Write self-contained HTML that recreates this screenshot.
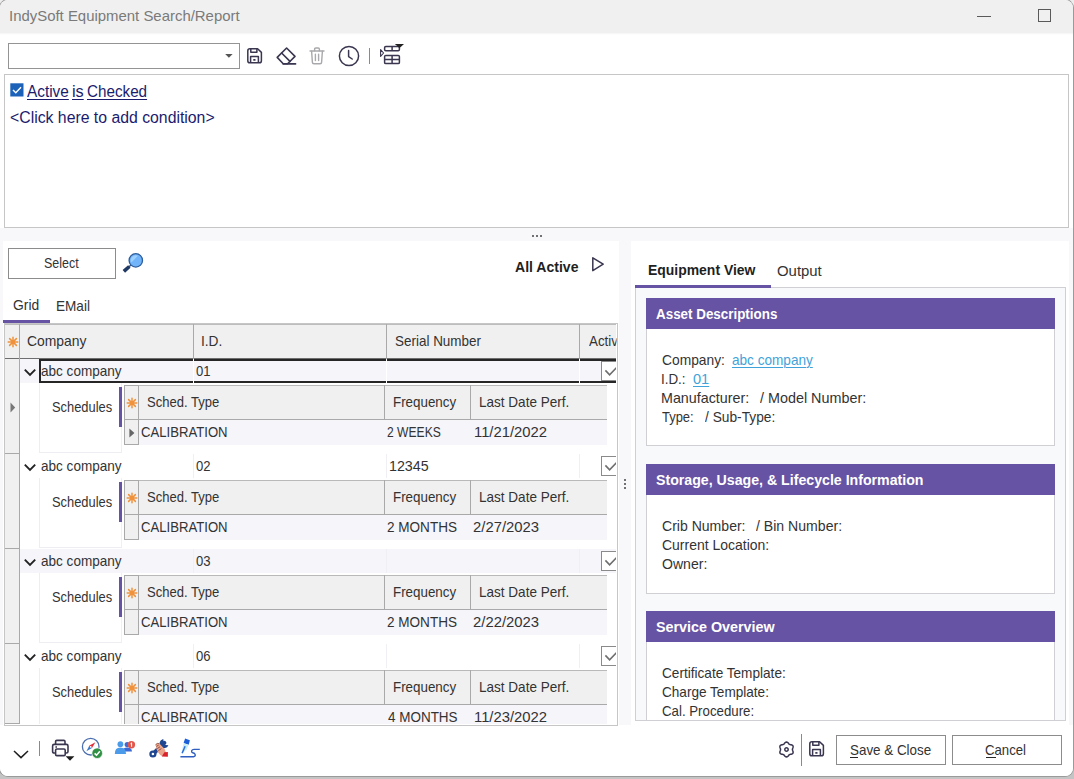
<!DOCTYPE html>
<html><head><meta charset="utf-8"><title>IndySoft Equipment Search/Report</title>
<style>
html,body{margin:0;padding:0}
body{width:1074px;height:779px;overflow:hidden;background:linear-gradient(#ededed 0px,#ededed 120px,#c4c4c4 600px,#c4c4c4 779px);font-family:"Liberation Sans", sans-serif;}
#win{position:absolute;left:0;top:0;width:1073px;height:776px;background:#fff;border-radius:8px;overflow:hidden;box-shadow:0 0 0 1px #9a9a9a;}
#win div,#win svg,#win span{position:absolute;box-sizing:border-box;}
#win span{white-space:pre;transform-origin:0 0;}
</style></head>
<body>
<div id="win">
<div style="left:0px;top:0px;width:1073px;height:33px;background:#f0f0f0;"></div>
<div style="left:0px;top:33px;width:1073px;height:2px;background:linear-gradient(#f4f4f4,#fff);"></div>
<div style="left:977px;top:15.5px;width:13.5px;height:1.2px;background:#5a5a5a;"></div>
<div style="left:1038px;top:9px;width:12px;height:12px;border:1px solid #5a5a5a;box-sizing:content-box;width:11px;height:11px;"></div>
<div style="left:8px;top:43px;width:232px;height:26px;border:1px solid #949494;background:#fff;"></div>
<svg style="left:224px;top:53px" width="10" height="6" viewBox="0 0 10 6"><path d="M1.2 1 L8.6 1 L4.9 4.8Z" fill="#555"/></svg>
<svg style="left:247.4px;top:48px" width="16" height="16" viewBox="0 0 16 16" fill="none" stroke="#3b3650" stroke-width="1.5" stroke-linejoin="round"><path d="M0.8 2.9 Q0.8 0.8 2.9 0.8 H10.6 L14.4 4.4 V12.7 Q14.4 14.8 12.3 14.8 H2.9 Q0.8 14.8 0.8 12.7Z"/><path d="M3.8 1 V4.2 H9.9 V1"/><path d="M3.6 14.8 V8.6 H11.4 V14.8"/><path d="M6.3 11.9 H8.5" stroke-width="1.7"/></svg>
<svg style="left:275px;top:46px" width="23" height="20" viewBox="0 0 23 20" fill="none" stroke="#3b3650" stroke-width="1.6" stroke-linejoin="round" stroke-linecap="round"><path d="M2.2 11.4 L11.6 2 L20 10.4 L12.6 17.8 H8.2Z"/><path d="M6.6 7 L15 15.4"/><path d="M8.2 17.9 H20.6"/></svg>
<svg style="left:309px;top:47px" width="16" height="18" viewBox="0 0 16 18" fill="none" stroke="#a9a9ad" stroke-width="1.4" stroke-linejoin="round" stroke-linecap="round"><path d="M1 4 H15"/><path d="M5.6 3.8 V2.2 Q5.6 1 6.8 1 H9.2 Q10.4 1 10.4 2.2 V3.8"/><path d="M2.6 4.2 L3.4 15.4 Q3.5 16.8 4.9 16.8 H11.1 Q12.5 16.8 12.6 15.4 L13.4 4.2"/><path d="M6.4 7.2 V13.6 M9.6 7.2 V13.6"/></svg>
<svg style="left:338px;top:45px" width="22" height="22" viewBox="0 0 22 22" fill="none" stroke="#3b3650" stroke-width="1.5" stroke-linecap="round" stroke-linejoin="round"><circle cx="11" cy="11" r="9.6"/><path d="M10.6 5.6 V11.6 L14.2 14"/></svg>
<div style="left:369px;top:48px;width:1px;height:15.5px;background:#8a8a8a;"></div>
<svg style="left:379px;top:43px" width="26" height="22" viewBox="0 0 26 22" fill="none" stroke="#3b3650" stroke-width="1.5" stroke-linejoin="round"><path d="M1.6 6.6 L4.6 10 L1.6 13.4Z" stroke-width="1.1" /><rect x="5.6" y="3.6" width="14.8" height="4.2" rx="1.2"/><path d="M13.1 3.6 V7.8"/><rect x="5.6" y="12.4" width="14.8" height="8.2" rx="1.2"/><path d="M5.6 16.5 H20.4 M13.1 12.4 V20.6"/><path d="M15.8 0.9 H25 L20.6 4.9Z" fill="#222" stroke="none"/></svg>
<div style="left:4px;top:74px;width:1065px;height:154px;border:1px solid #c6c6c6;background:#fff;"></div>
<svg style="left:10px;top:83px" width="14" height="14" viewBox="0 0 14 14"><rect x="0.3" y="0.3" width="13.2" height="13.2" fill="#1c62b9"/><path d="M3 7 L5.8 9.8 L11 4.2" fill="none" stroke="#fff" stroke-width="1.4"/></svg>
<div style="left:0px;top:228px;width:1073px;height:498px;background:#f8f8fb;"></div>
<div style="left:531.5px;top:234.6px;width:2px;height:2px;background:#444;border-radius:1px;"></div>
<div style="left:535.6px;top:234.6px;width:2px;height:2px;background:#444;border-radius:1px;"></div>
<div style="left:539.7px;top:234.6px;width:2px;height:2px;background:#444;border-radius:1px;"></div>
<div style="left:3px;top:241px;width:615.5px;height:485px;background:#fff;"></div>
<div style="left:8px;top:248px;width:108px;height:31px;border:1px solid #8c8c8c;background:#fff;"></div>
<svg style="left:121px;top:250px" width="26" height="26" viewBox="0 0 26 26"><path d="M7 17.6 L10.6 14.5" stroke="#3a5a8a" stroke-width="1.4"/><path d="M4.2 20.2 L7 17.7" stroke="#1f3864" stroke-width="3.6" stroke-linecap="square"/><circle cx="14.8" cy="10.4" r="6.7" fill="#72b4fa" stroke="#2c5d9c" stroke-width="1.3"/><path d="M10.4 12.6 A5 5 0 0 1 17 5.8 Z" fill="#a5d3ff" opacity="0.85"/></svg>
<svg style="left:590px;top:255px" width="16" height="18" viewBox="0 0 16 18"><path d="M2.8 2.8 L13.2 9.2 L2.8 15.6Z" fill="none" stroke="#3b3650" stroke-width="1.5" stroke-linejoin="round"/></svg>
<div style="left:3px;top:320px;width:47px;height:3px;background:#6753a4;"></div>
<div style="left:4px;top:323px;width:614px;height:403px;border:1px solid #c6c6c6;background:#fff;"></div>
<div style="left:5px;top:324px;width:15px;height:401px;background:#f0f0f0;border-right:1px solid #a9a9a9;"></div>
<div style="left:5px;top:324px;width:612px;height:35px;background:#f0f0f0;border-top:1px solid #bdbdbd;border-bottom:1px solid #6e6e6e;"></div>
<div style="left:19px;top:324px;width:1px;height:35px;background:#a9a9a9;"></div>
<div style="left:193px;top:324px;width:1px;height:35px;background:#a9a9a9;"></div>
<div style="left:386px;top:324px;width:1px;height:35px;background:#a9a9a9;"></div>
<div style="left:579px;top:324px;width:1px;height:35px;background:#a9a9a9;"></div>
<svg style="left:6.5px;top:335.8px" width="12" height="12" viewBox="-6 -6 12 12" stroke="#f0923c" stroke-width="1.5" stroke-linecap="round"><path d="M0 -4.8V4.8M-4.8 0H4.8M-3.4 -3.4L3.4 3.4M-3.4 3.4L3.4 -3.4"/></svg>
<div style="left:20px;top:359px;width:598px;height:24px;background:#f5f5fa;"></div>
<div style="left:193px;top:359px;width:1px;height:24px;background:#f0f0f4;"></div>
<div style="left:386px;top:359px;width:1px;height:24px;background:#f0f0f4;"></div>
<div style="left:579px;top:359px;width:1px;height:24px;background:#f0f0f4;"></div>
<div style="left:39px;top:359px;width:585px;height:24px;border:2px solid #262626;"></div>
<div style="left:193px;top:359px;width:1px;height:24px;background:#fff;"></div>
<div style="left:386px;top:359px;width:1px;height:24px;background:#fff;"></div>
<div style="left:579px;top:359px;width:1px;height:24px;background:#fff;"></div>
<svg style="left:22.5px;top:367.5px" width="14" height="9" viewBox="0 0 14 9"><path d="M1.8 1.6 L7 6.8 L12.2 1.6" fill="none" stroke="#222" stroke-width="1.9"/></svg>
<div style="left:601px;top:361px;width:16px;height:20px;overflow:hidden"><div style="left:0;top:0;width:20px;height:20px;border:1px solid #8a8a8a;background:#fff;"></div><svg style="left:0;top:0" width="20" height="20" viewBox="0 0 20 20"><path d="M4.4 9.4 L8.6 13.9 L17 5" fill="none" stroke="#6e6e6e" stroke-width="1.6"/></svg></div>
<div style="left:39px;top:383px;width:1px;height:70px;background:#eeeef2;"></div>
<div style="left:121px;top:383px;width:1px;height:70px;background:#f0f0f4;"></div>
<div style="left:39px;top:452px;width:83px;height:1px;background:#eeeef2;"></div>
<div style="left:119px;top:387px;width:3px;height:40px;background:#6753a4;"></div>
<div style="left:124px;top:385px;width:483px;height:35px;background:#f0f0f0;border-top:1px solid #b9b9b9;border-bottom:1px solid #a9a9a9;"></div>
<div style="left:124px;top:420px;width:483px;height:25px;background:#f5f5fa;"></div>
<div style="left:124px;top:385px;width:15px;height:60px;background:#f0f0f0;border:1px solid #a9a9a9;"></div>
<div style="left:124px;top:419px;width:15px;height:1px;background:#a9a9a9;"></div>
<div style="left:384px;top:385px;width:1px;height:35px;background:#a9a9a9;"></div>
<div style="left:470px;top:385px;width:1px;height:35px;background:#a9a9a9;"></div>
<svg style="left:125.5px;top:396.5px" width="12" height="12" viewBox="-6 -6 12 12" stroke="#f0923c" stroke-width="1.5" stroke-linecap="round"><path d="M0 -4.8V4.8M-4.8 0H4.8M-3.4 -3.4L3.4 3.4M-3.4 3.4L3.4 -3.4"/></svg>
<svg style="left:129px;top:427.5px" width="6" height="10" viewBox="0 0 6 10"><path d="M0.4 0.4 L5.4 5 L0.4 9.6Z" fill="#666"/></svg>
<div style="left:5px;top:453px;width:14px;height:1px;background:#a9a9a9;"></div>
<div style="left:193px;top:454px;width:1px;height:24px;background:#f0f0f4;"></div>
<div style="left:386px;top:454px;width:1px;height:24px;background:#f0f0f4;"></div>
<div style="left:579px;top:454px;width:1px;height:24px;background:#f0f0f4;"></div>
<svg style="left:22.5px;top:462.5px" width="14" height="9" viewBox="0 0 14 9"><path d="M1.8 1.6 L7 6.8 L12.2 1.6" fill="none" stroke="#222" stroke-width="1.9"/></svg>
<div style="left:601px;top:456px;width:16px;height:20px;overflow:hidden"><div style="left:0;top:0;width:20px;height:20px;border:1px solid #8a8a8a;background:#fff;"></div><svg style="left:0;top:0" width="20" height="20" viewBox="0 0 20 20"><path d="M4.4 9.4 L8.6 13.9 L17 5" fill="none" stroke="#6e6e6e" stroke-width="1.6"/></svg></div>
<div style="left:39px;top:478px;width:1px;height:70px;background:#eeeef2;"></div>
<div style="left:121px;top:478px;width:1px;height:70px;background:#f0f0f4;"></div>
<div style="left:39px;top:547px;width:83px;height:1px;background:#eeeef2;"></div>
<div style="left:119px;top:482px;width:3px;height:40px;background:#6753a4;"></div>
<div style="left:124px;top:480px;width:483px;height:35px;background:#f0f0f0;border-top:1px solid #b9b9b9;border-bottom:1px solid #a9a9a9;"></div>
<div style="left:124px;top:515px;width:483px;height:25px;background:#f5f5fa;"></div>
<div style="left:124px;top:480px;width:15px;height:60px;background:#f0f0f0;border:1px solid #a9a9a9;"></div>
<div style="left:124px;top:514px;width:15px;height:1px;background:#a9a9a9;"></div>
<div style="left:384px;top:480px;width:1px;height:35px;background:#a9a9a9;"></div>
<div style="left:470px;top:480px;width:1px;height:35px;background:#a9a9a9;"></div>
<svg style="left:125.5px;top:491.5px" width="12" height="12" viewBox="-6 -6 12 12" stroke="#f0923c" stroke-width="1.5" stroke-linecap="round"><path d="M0 -4.8V4.8M-4.8 0H4.8M-3.4 -3.4L3.4 3.4M-3.4 3.4L3.4 -3.4"/></svg>
<div style="left:5px;top:548px;width:14px;height:1px;background:#a9a9a9;"></div>
<div style="left:20px;top:549px;width:598px;height:24px;background:#f5f5fa;"></div>
<div style="left:193px;top:549px;width:1px;height:24px;background:#f0f0f4;"></div>
<div style="left:386px;top:549px;width:1px;height:24px;background:#f0f0f4;"></div>
<div style="left:579px;top:549px;width:1px;height:24px;background:#f0f0f4;"></div>
<svg style="left:22.5px;top:557.5px" width="14" height="9" viewBox="0 0 14 9"><path d="M1.8 1.6 L7 6.8 L12.2 1.6" fill="none" stroke="#222" stroke-width="1.9"/></svg>
<div style="left:601px;top:551px;width:16px;height:20px;overflow:hidden"><div style="left:0;top:0;width:20px;height:20px;border:1px solid #8a8a8a;background:#fff;"></div><svg style="left:0;top:0" width="20" height="20" viewBox="0 0 20 20"><path d="M4.4 9.4 L8.6 13.9 L17 5" fill="none" stroke="#6e6e6e" stroke-width="1.6"/></svg></div>
<div style="left:39px;top:573px;width:1px;height:70px;background:#eeeef2;"></div>
<div style="left:121px;top:573px;width:1px;height:70px;background:#f0f0f4;"></div>
<div style="left:39px;top:642px;width:83px;height:1px;background:#eeeef2;"></div>
<div style="left:119px;top:577px;width:3px;height:40px;background:#6753a4;"></div>
<div style="left:124px;top:575px;width:483px;height:35px;background:#f0f0f0;border-top:1px solid #b9b9b9;border-bottom:1px solid #a9a9a9;"></div>
<div style="left:124px;top:610px;width:483px;height:25px;background:#f5f5fa;"></div>
<div style="left:124px;top:575px;width:15px;height:60px;background:#f0f0f0;border:1px solid #a9a9a9;"></div>
<div style="left:124px;top:609px;width:15px;height:1px;background:#a9a9a9;"></div>
<div style="left:384px;top:575px;width:1px;height:35px;background:#a9a9a9;"></div>
<div style="left:470px;top:575px;width:1px;height:35px;background:#a9a9a9;"></div>
<svg style="left:125.5px;top:586.5px" width="12" height="12" viewBox="-6 -6 12 12" stroke="#f0923c" stroke-width="1.5" stroke-linecap="round"><path d="M0 -4.8V4.8M-4.8 0H4.8M-3.4 -3.4L3.4 3.4M-3.4 3.4L3.4 -3.4"/></svg>
<div style="left:5px;top:643px;width:14px;height:1px;background:#a9a9a9;"></div>
<div style="left:193px;top:644px;width:1px;height:24px;background:#f0f0f4;"></div>
<div style="left:386px;top:644px;width:1px;height:24px;background:#f0f0f4;"></div>
<div style="left:579px;top:644px;width:1px;height:24px;background:#f0f0f4;"></div>
<svg style="left:22.5px;top:652.5px" width="14" height="9" viewBox="0 0 14 9"><path d="M1.8 1.6 L7 6.8 L12.2 1.6" fill="none" stroke="#222" stroke-width="1.9"/></svg>
<div style="left:601px;top:646px;width:16px;height:20px;overflow:hidden"><div style="left:0;top:0;width:20px;height:20px;border:1px solid #8a8a8a;background:#fff;"></div><svg style="left:0;top:0" width="20" height="20" viewBox="0 0 20 20"><path d="M4.4 9.4 L8.6 13.9 L17 5" fill="none" stroke="#6e6e6e" stroke-width="1.6"/></svg></div>
<div style="left:39px;top:668px;width:1px;height:70px;background:#eeeef2;"></div>
<div style="left:121px;top:668px;width:1px;height:70px;background:#f0f0f4;"></div>
<div style="left:39px;top:737px;width:83px;height:1px;background:#eeeef2;"></div>
<div style="left:119px;top:672px;width:3px;height:40px;background:#6753a4;"></div>
<div style="left:124px;top:670px;width:483px;height:35px;background:#f0f0f0;border-top:1px solid #b9b9b9;border-bottom:1px solid #a9a9a9;"></div>
<div style="left:124px;top:705px;width:483px;height:25px;background:#f5f5fa;"></div>
<div style="left:124px;top:670px;width:15px;height:60px;background:#f0f0f0;border:1px solid #a9a9a9;"></div>
<div style="left:124px;top:704px;width:15px;height:1px;background:#a9a9a9;"></div>
<div style="left:384px;top:670px;width:1px;height:35px;background:#a9a9a9;"></div>
<div style="left:470px;top:670px;width:1px;height:35px;background:#a9a9a9;"></div>
<svg style="left:125.5px;top:681.5px" width="12" height="12" viewBox="-6 -6 12 12" stroke="#f0923c" stroke-width="1.5" stroke-linecap="round"><path d="M0 -4.8V4.8M-4.8 0H4.8M-3.4 -3.4L3.4 3.4M-3.4 3.4L3.4 -3.4"/></svg>
<svg style="left:9.5px;top:401.5px" width="6" height="11" viewBox="0 0 6 11"><path d="M0.5 0.5 L5.2 5.5 L0.5 10.5Z" fill="#777"/></svg>
<div style="left:0px;top:725px;width:1073px;height:52px;background:#fff;"></div>
<div style="left:5px;top:723px;width:15px;height:1px;background:#a9a9a9;"></div>
<div style="left:5px;top:724px;width:612px;height:1px;background:#fff;"></div>
<div style="left:4px;top:725px;width:614px;height:1px;background:#c6c6c6;"></div>
<div style="left:616px;top:324px;width:1px;height:401px;background:#fff;"></div>
<div style="left:617px;top:323px;width:1px;height:403px;background:#c6c6c6;"></div>
<div style="left:618px;top:323px;width:17px;height:403px;background:#fff;"></div>
<div style="left:619px;top:241px;width:12px;height:485px;background:#f8f8fb;"></div>
<div style="left:623.5px;top:478.6px;width:2px;height:2px;background:#444;border-radius:1px;"></div>
<div style="left:623.5px;top:482.5px;width:2px;height:2px;background:#444;border-radius:1px;"></div>
<div style="left:623.5px;top:486.5px;width:2px;height:2px;background:#444;border-radius:1px;"></div>
<div style="left:631px;top:241px;width:438px;height:485px;background:#fff;"></div>
<div style="left:635px;top:287px;width:431px;height:434px;border:1px solid #cfcfd4;background:#f8f9fb;box-sizing:border-box;"></div>
<div style="left:635px;top:284.6px;width:136px;height:3px;background:#6753a4;"></div>
<div style="left:646px;top:298px;width:409px;height:31px;background:#6753a4;"></div>
<div style="left:646px;top:329px;width:409px;height:117px;background:#fff;border:1px solid #cfcfd4;border-top:none;box-sizing:border-box;"></div>
<div style="left:646px;top:464px;width:409px;height:31px;background:#6753a4;"></div>
<div style="left:646px;top:495px;width:409px;height:99px;background:#fff;border:1px solid #cfcfd4;border-top:none;box-sizing:border-box;"></div>
<div style="left:646px;top:611px;width:409px;height:31px;background:#6753a4;"></div>
<div style="left:646px;top:642px;width:409px;height:88px;background:#fff;border:1px solid #cfcfd4;border-top:none;box-sizing:border-box;"></div>
<div style="left:631px;top:721px;width:438px;height:14px;background:#fff;"></div>
<div style="left:635px;top:720px;width:431px;height:1px;background:#cfcfd4;"></div>
<div style="left:618.5px;top:725px;width:16.5px;height:1px;background:#fff;"></div>
<svg style="left:12px;top:749px" width="18" height="11" viewBox="0 0 18 11"><path d="M2 2 L9 8.6 L16 2" fill="none" stroke="#1e1e1e" stroke-width="1.5"/></svg>
<div style="left:39px;top:741px;width:1px;height:15px;background:#8a8a8a;"></div>
<svg style="left:50.5px;top:739px" width="24" height="23" viewBox="0 0 24 23" fill="none" stroke="#3b3650" stroke-width="1.6" stroke-linejoin="round"><path d="M4.6 5.4 V2.6 Q4.6 1.4 5.8 1.4 H12.8 Q14 1.4 14 2.6 V5.4"/><path d="M4.4 14 H3.2 Q1.6 14 1.6 12.4 V7 Q1.6 5.4 3.2 5.4 H15.4 Q17 5.4 17 7 V12.4 Q17 14 15.4 14 H14.2"/><rect x="4.6" y="10" width="9.6" height="6.6" rx="1.2" fill="#fff"/><path d="M4.4 8 H6"/><path d="M14.6 17.2 H23.4 L19 21.8Z" fill="#1e1e1e" stroke="none"/></svg>
<svg style="left:80px;top:736px" width="24" height="24" viewBox="0 0 24 24"><circle cx="10.7" cy="10.7" r="8.3" fill="#fff" stroke="#4b6fae" stroke-width="1.3"/><path d="M15.4 6.2 L12 12 L9.4 9.6Z" fill="#e0303c"/><path d="M6.4 15.2 L9.4 9.6 L12 12Z" fill="#3b78c4"/><circle cx="10.7" cy="10.8" r="0.9" fill="#fff"/><circle cx="17.2" cy="17.2" r="5.3" fill="#2f8f42" stroke="#fff" stroke-width="0.7"/><path d="M14.6 17.4 L16.5 19.2 L19.9 15.3" fill="none" stroke="#fff" stroke-width="1.6"/></svg>
<svg style="left:113px;top:738px" width="24" height="20" viewBox="0 0 24 20"><circle cx="14.2" cy="6.6" r="2.6" fill="#3d6bd6"/><path d="M9.4 13.6 Q9.6 9.6 14.2 9.6 Q18.8 9.6 19 13.6Z" fill="#3d6bd6"/><circle cx="7.4" cy="6.2" r="2.9" fill="#4c9bea"/><path d="M1.8 16 Q1.8 9.6 7.4 9.6 Q13 9.6 13 16Z" fill="#4c9bea"/><circle cx="18.4" cy="6.8" r="3.7" fill="#e2574c"/><path d="M18.6 4.8 V8.8 M17.5 5.8 L18.6 4.8" stroke="#fff" stroke-width="1" fill="none"/></svg>
<svg style="left:148px;top:736px" width="24" height="24" viewBox="0 0 24 24"><path d="M5 18 L16.4 6.8" stroke="#1f4690" stroke-width="4" stroke-linecap="round"/><circle cx="4.9" cy="18" r="3.6" fill="#1f4690"/><circle cx="4.9" cy="18" r="1.3" fill="#fff"/><path d="M14.6 3.2 A4.6 4.6 0 1 0 20.4 9.2 L17.4 9 L15.2 6.8 L15.6 3.6Z" fill="#1f4690"/><path d="M7.6 8.6 Q9.4 6.4 11.4 7.6 L16.6 13 L18 16.6 L14.4 20.2 Q11.6 19 10 16.2 Q8 13 7.6 8.6Z" fill="#eba48c"/><path d="M8.4 10.4 L10.6 9.2 M9.2 12.6 L12 10.8 M10.4 14.6 L13.4 12.6" stroke="#8a4a3a" stroke-width="0.9" fill="none"/><path d="M7.4 9 Q9 6.6 11.4 7.6" stroke="#8a4a3a" stroke-width="0.8" fill="none"/><path d="M16.4 16.2 L19.9 16 L19.9 20.8 L13.8 20.5Z" fill="#d9222a"/></svg>
<svg style="left:178px;top:736px" width="24" height="24" viewBox="0 0 24 24" fill="none"><path d="M7.1 2.6 L11.9 4.3 L10.7 8.8 L5.6 7Z" fill="#1a5fd8"/><path d="M5.7 7.2 L10.6 9 L8.6 13.6 L4.1 17.2 L4.6 11.6Z" fill="#c6ecf6"/><path d="M7.1 10.3 L4.1 17.2" stroke="#2a6fd8" stroke-width="1.5"/><path d="M2.4 20.7 H15.5 Q17.6 20.4 17.2 18.6 Q16.8 17.2 14.8 16.8 Q13.2 16.2 13.8 14.6 Q14.2 13.5 16 13.4 H21.8" stroke="#2f5fc0" stroke-width="1.4"/></svg>
<svg style="left:776.5px;top:739.5px" width="19" height="19" viewBox="-9.5 -9.5 19 19" fill="none" stroke="#3b3650" stroke-width="1.5" stroke-linejoin="round"><path d="M5.90 -0.00 L5.98 -0.52 L6.18 -1.09 L6.42 -1.72 L6.60 -2.40 L6.62 -3.08 L6.41 -3.70 L5.98 -4.19 L5.38 -4.52 L4.70 -4.70 L4.03 -4.81 L3.44 -4.92 L2.95 -5.11 L2.54 -5.44 L2.15 -5.90 L1.72 -6.42 L1.22 -6.92 L0.64 -7.27 L0.00 -7.40 L-0.64 -7.27 L-1.22 -6.92 L-1.72 -6.42 L-2.15 -5.90 L-2.54 -5.44 L-2.95 -5.11 L-3.44 -4.92 L-4.03 -4.81 L-4.70 -4.70 L-5.38 -4.52 L-5.98 -4.19 L-6.41 -3.70 L-6.62 -3.08 L-6.60 -2.40 L-6.42 -1.72 L-6.18 -1.09 L-5.98 -0.52 L-5.90 -0.00 L-5.98 0.52 L-6.18 1.09 L-6.42 1.72 L-6.60 2.40 L-6.62 3.08 L-6.41 3.70 L-5.98 4.19 L-5.38 4.52 L-4.70 4.70 L-4.03 4.81 L-3.44 4.92 L-2.95 5.11 L-2.54 5.44 L-2.15 5.90 L-1.72 6.42 L-1.22 6.92 L-0.64 7.27 L-0.00 7.40 L0.64 7.27 L1.22 6.92 L1.72 6.42 L2.15 5.90 L2.54 5.44 L2.95 5.11 L3.44 4.92 L4.03 4.81 L4.70 4.70 L5.38 4.52 L5.98 4.19 L6.41 3.70 L6.62 3.08 L6.60 2.40 L6.42 1.72 L6.18 1.09 L5.98 0.52Z"/><circle r="1.7"/></svg>
<div style="left:801px;top:733.5px;width:1px;height:32px;background:#8a8a8a;"></div>
<svg style="left:808.6px;top:741.2px" width="16" height="16" viewBox="0 0 16 16" fill="none" stroke="#3b3650" stroke-width="1.5" stroke-linejoin="round"><path d="M0.8 2.9 Q0.8 0.8 2.9 0.8 H10.6 L14.4 4.4 V12.7 Q14.4 14.8 12.3 14.8 H2.9 Q0.8 14.8 0.8 12.7Z"/><path d="M3.8 1 V4.2 H9.9 V1"/><path d="M3.6 14.8 V8.6 H11.4 V14.8"/><path d="M6.3 11.9 H8.5" stroke-width="1.7"/></svg>
<div style="left:836px;top:735px;width:110px;height:30px;border:1px solid #8c8c8c;background:#fff;"></div>
<div style="left:952px;top:735px;width:110px;height:30px;border:1px solid #8c8c8c;background:#fff;"></div>
<div style="left:850px;top:757px;width:8px;height:1px;background:#262626;"></div>
<div style="left:986px;top:757px;width:9.5px;height:1px;background:#262626;"></div>
<span style="left:9.13px;top:7px;font-size:15px;line-height:17px;height:17px;font-weight:400;color:#7a7a7a;transform:scaleX(0.9949);">IndySoft Equipment Search/Report</span>
<span style="left:27.40px;top:83px;font-size:16px;line-height:17px;height:17px;font-weight:400;color:#1b1b6e;text-decoration:underline;text-underline-offset:1.5px;text-decoration-thickness:1px;transform:scaleX(0.9599);">Active</span>
<span style="left:72.39px;top:83px;font-size:16px;line-height:17px;height:17px;font-weight:400;color:#1b1b6e;text-decoration:underline;text-underline-offset:1.5px;text-decoration-thickness:1px;transform:scaleX(1.0145);">is</span>
<span style="left:87.49px;top:83px;font-size:16px;line-height:17px;height:17px;font-weight:400;color:#1b1b6e;text-decoration:underline;text-underline-offset:1.5px;text-decoration-thickness:1px;transform:scaleX(0.9512);">Checked</span>
<span style="left:9.96px;top:109px;font-size:16px;line-height:17px;height:17px;font-weight:400;color:#1b1b6e;transform:scaleX(0.9874);">&lt;Click here to add condition&gt;</span>
<span style="left:44.01px;top:255px;font-size:14.5px;line-height:16px;height:16px;font-weight:400;color:#333333;transform:scaleX(0.8597);">Select</span>
<span style="left:514.88px;top:259px;font-size:14.5px;line-height:16px;height:16px;font-weight:700;color:#1f1f1f;transform:scaleX(0.9681);">All Active</span>
<span style="left:12.95px;top:297px;font-size:14.5px;line-height:16px;height:16px;font-weight:400;color:#333333;transform:scaleX(0.9576);">Grid</span>
<span style="left:55.54px;top:298px;font-size:14.5px;line-height:16px;height:16px;font-weight:400;color:#333333;transform:scaleX(0.9365);">EMail</span>
<span style="left:27.45px;top:333px;font-size:14.5px;line-height:16px;height:16px;font-weight:400;color:#333333;transform:scaleX(0.9580);">Company</span>
<span style="left:201.13px;top:333px;font-size:14.5px;line-height:16px;height:16px;font-weight:400;color:#333333;transform:scaleX(0.9446);">I.D.</span>
<span style="left:394.68px;top:333px;font-size:14.5px;line-height:16px;height:16px;font-weight:400;color:#333333;transform:scaleX(0.9279);">Serial Number</span>
<span style="left:588.70px;top:333px;font-size:14.5px;line-height:16px;height:16px;font-weight:400;color:#333333;width:29.67px;overflow:hidden;transform:scaleX(0.9200);">Active</span>
<span style="left:41.18px;top:363px;font-size:14.5px;line-height:16px;height:16px;font-weight:400;color:#333333;transform:scaleX(0.9348);">abc company</span>
<span style="left:196.19px;top:363px;font-size:14.5px;line-height:16px;height:16px;font-weight:400;color:#333333;transform:scaleX(0.9014);">01</span>
<span style="left:52.00px;top:399px;font-size:14.5px;line-height:16px;height:16px;font-weight:400;color:#333333;transform:scaleX(0.8876);">Schedules</span>
<span style="left:147.09px;top:394px;font-size:14.5px;line-height:16px;height:16px;font-weight:400;color:#333333;transform:scaleX(0.8999);">Sched. Type</span>
<span style="left:392.56px;top:394px;font-size:14.5px;line-height:16px;height:16px;font-weight:400;color:#333333;transform:scaleX(0.9217);">Frequency</span>
<span style="left:478.84px;top:394px;font-size:14.5px;line-height:16px;height:16px;font-weight:400;color:#333333;transform:scaleX(0.9335);">Last Date Perf.</span>
<span style="left:140.78px;top:424px;font-size:14.5px;line-height:16px;height:16px;font-weight:400;color:#333333;transform:scaleX(0.9056);">CALIBRATION</span>
<span style="left:387.33px;top:424px;font-size:14.5px;line-height:16px;height:16px;font-weight:400;color:#333333;transform:scaleX(0.8342);">2 WEEKS</span>
<span style="left:473.57px;top:424px;font-size:14.5px;line-height:16px;height:16px;font-weight:400;color:#333333;transform:scaleX(1.0214);">11/21/2022</span>
<span style="left:41.18px;top:458px;font-size:14.5px;line-height:16px;height:16px;font-weight:400;color:#333333;transform:scaleX(0.9348);">abc company</span>
<span style="left:196.19px;top:458px;font-size:14.5px;line-height:16px;height:16px;font-weight:400;color:#333333;transform:scaleX(0.9014);">02</span>
<span style="left:389.31px;top:458px;font-size:14.5px;line-height:16px;height:16px;font-weight:400;color:#333333;transform:scaleX(0.9838);">12345</span>
<span style="left:52.00px;top:494px;font-size:14.5px;line-height:16px;height:16px;font-weight:400;color:#333333;transform:scaleX(0.8876);">Schedules</span>
<span style="left:147.09px;top:489px;font-size:14.5px;line-height:16px;height:16px;font-weight:400;color:#333333;transform:scaleX(0.8999);">Sched. Type</span>
<span style="left:392.56px;top:489px;font-size:14.5px;line-height:16px;height:16px;font-weight:400;color:#333333;transform:scaleX(0.9217);">Frequency</span>
<span style="left:478.84px;top:489px;font-size:14.5px;line-height:16px;height:16px;font-weight:400;color:#333333;transform:scaleX(0.9335);">Last Date Perf.</span>
<span style="left:140.78px;top:519px;font-size:14.5px;line-height:16px;height:16px;font-weight:400;color:#333333;transform:scaleX(0.9056);">CALIBRATION</span>
<span style="left:387.26px;top:519px;font-size:14.5px;line-height:16px;height:16px;font-weight:400;color:#333333;transform:scaleX(0.9344);">2 MONTHS</span>
<span style="left:472.70px;top:519px;font-size:14.5px;line-height:16px;height:16px;font-weight:400;color:#333333;transform:scaleX(1.0247);">2/27/2023</span>
<span style="left:41.18px;top:553px;font-size:14.5px;line-height:16px;height:16px;font-weight:400;color:#333333;transform:scaleX(0.9348);">abc company</span>
<span style="left:196.19px;top:553px;font-size:14.5px;line-height:16px;height:16px;font-weight:400;color:#333333;transform:scaleX(0.9014);">03</span>
<span style="left:52.00px;top:589px;font-size:14.5px;line-height:16px;height:16px;font-weight:400;color:#333333;transform:scaleX(0.8876);">Schedules</span>
<span style="left:147.09px;top:584px;font-size:14.5px;line-height:16px;height:16px;font-weight:400;color:#333333;transform:scaleX(0.8999);">Sched. Type</span>
<span style="left:392.56px;top:584px;font-size:14.5px;line-height:16px;height:16px;font-weight:400;color:#333333;transform:scaleX(0.9217);">Frequency</span>
<span style="left:478.84px;top:584px;font-size:14.5px;line-height:16px;height:16px;font-weight:400;color:#333333;transform:scaleX(0.9335);">Last Date Perf.</span>
<span style="left:140.78px;top:614px;font-size:14.5px;line-height:16px;height:16px;font-weight:400;color:#333333;transform:scaleX(0.9056);">CALIBRATION</span>
<span style="left:387.26px;top:614px;font-size:14.5px;line-height:16px;height:16px;font-weight:400;color:#333333;transform:scaleX(0.9344);">2 MONTHS</span>
<span style="left:472.70px;top:614px;font-size:14.5px;line-height:16px;height:16px;font-weight:400;color:#333333;transform:scaleX(1.0247);">2/22/2023</span>
<span style="left:41.18px;top:648px;font-size:14.5px;line-height:16px;height:16px;font-weight:400;color:#333333;transform:scaleX(0.9348);">abc company</span>
<span style="left:196.19px;top:648px;font-size:14.5px;line-height:16px;height:16px;font-weight:400;color:#333333;transform:scaleX(0.9014);">06</span>
<span style="left:52.00px;top:684px;font-size:14.5px;line-height:16px;height:16px;font-weight:400;color:#333333;transform:scaleX(0.8876);">Schedules</span>
<span style="left:147.09px;top:679px;font-size:14.5px;line-height:16px;height:16px;font-weight:400;color:#333333;transform:scaleX(0.8999);">Sched. Type</span>
<span style="left:392.56px;top:679px;font-size:14.5px;line-height:16px;height:16px;font-weight:400;color:#333333;transform:scaleX(0.9217);">Frequency</span>
<span style="left:478.84px;top:679px;font-size:14.5px;line-height:16px;height:16px;font-weight:400;color:#333333;transform:scaleX(0.9335);">Last Date Perf.</span>
<span style="left:140.78px;top:709px;font-size:14.5px;line-height:16px;height:16px;font-weight:400;color:#333333;transform:scaleX(0.9056);">CALIBRATION</span>
<span style="left:387.69px;top:709px;font-size:14.5px;line-height:16px;height:16px;font-weight:400;color:#333333;transform:scaleX(0.9287);">4 MONTHS</span>
<span style="left:473.57px;top:709px;font-size:14.5px;line-height:16px;height:16px;font-weight:400;color:#333333;transform:scaleX(1.0214);">11/23/2022</span>
<span style="left:648.23px;top:262px;font-size:14.5px;line-height:16px;height:16px;font-weight:700;color:#1f1f1f;transform:scaleX(0.9615);">Equipment View</span>
<span style="left:776.90px;top:263px;font-size:14.5px;line-height:16px;height:16px;font-weight:400;color:#333333;transform:scaleX(1.0280);">Output</span>
<span style="left:656.39px;top:306px;font-size:14.5px;line-height:16px;height:16px;font-weight:700;color:#fff;transform:scaleX(0.9239);">Asset Descriptions</span>
<span style="left:656.38px;top:472px;font-size:14.5px;line-height:16px;height:16px;font-weight:700;color:#fff;transform:scaleX(0.9765);">Storage, Usage, &amp; Lifecycle Information</span>
<span style="left:656.38px;top:619px;font-size:14.5px;line-height:16px;height:16px;font-weight:700;color:#fff;transform:scaleX(0.9872);">Service Overview</span>
<span style="left:661.85px;top:352px;font-size:14.5px;line-height:16px;height:16px;font-weight:400;color:#333333;transform:scaleX(0.9517);">Company:</span>
<span style="left:732.08px;top:352px;font-size:14.5px;line-height:16px;height:16px;font-weight:400;color:#3fa3da;text-decoration:underline;text-underline-offset:1.5px;text-decoration-thickness:1px;transform:scaleX(0.9372);">abc company</span>
<span style="left:661.45px;top:371px;font-size:14.5px;line-height:16px;height:16px;font-weight:400;color:#333333;transform:scaleX(0.9237);">I.D.:</span>
<span style="left:692.84px;top:371px;font-size:14.5px;line-height:16px;height:16px;font-weight:400;color:#3fa3da;text-decoration:underline;text-underline-offset:1.5px;text-decoration-thickness:1px;transform:scaleX(1.0074);">01</span>
<span style="left:661.38px;top:390px;font-size:14.5px;line-height:16px;height:16px;font-weight:400;color:#333333;transform:scaleX(0.9849);">Manufacturer:</span>
<span style="left:760.30px;top:390px;font-size:14.5px;line-height:16px;height:16px;font-weight:400;color:#333333;transform:scaleX(0.9909);">/ Model Number:</span>
<span style="left:662.30px;top:409px;font-size:14.5px;line-height:16px;height:16px;font-weight:400;color:#333333;transform:scaleX(0.8931);">Type:</span>
<span style="left:704.90px;top:409px;font-size:14.5px;line-height:16px;height:16px;font-weight:400;color:#333333;transform:scaleX(0.9473);">/ Sub-Type:</span>
<span style="left:661.84px;top:518px;font-size:14.5px;line-height:16px;height:16px;font-weight:400;color:#333333;transform:scaleX(0.9688);">Crib Number:</span>
<span style="left:756.20px;top:518px;font-size:14.5px;line-height:16px;height:16px;font-weight:400;color:#333333;transform:scaleX(0.9710);">/ Bin Number:</span>
<span style="left:661.84px;top:537px;font-size:14.5px;line-height:16px;height:16px;font-weight:400;color:#333333;transform:scaleX(0.9639);">Current Location:</span>
<span style="left:661.84px;top:556px;font-size:14.5px;line-height:16px;height:16px;font-weight:400;color:#333333;transform:scaleX(0.9699);">Owner:</span>
<span style="left:661.86px;top:665px;font-size:14.5px;line-height:16px;height:16px;font-weight:400;color:#333333;transform:scaleX(0.9380);">Certificate Template:</span>
<span style="left:661.86px;top:684px;font-size:14.5px;line-height:16px;height:16px;font-weight:400;color:#333333;transform:scaleX(0.9363);">Charge Template:</span>
<span style="left:661.88px;top:703px;font-size:14.5px;line-height:16px;height:16px;font-weight:400;color:#333333;transform:scaleX(0.9144);">Cal. Procedure:</span>
<span style="left:849.58px;top:742px;font-size:14.5px;line-height:16px;height:16px;font-weight:400;color:#333333;transform:scaleX(0.9239);">Save &amp; Close</span>
<span style="left:985.38px;top:742px;font-size:14.5px;line-height:16px;height:16px;font-weight:400;color:#333333;transform:scaleX(0.9080);">Cancel</span>
</div>
</body></html>
